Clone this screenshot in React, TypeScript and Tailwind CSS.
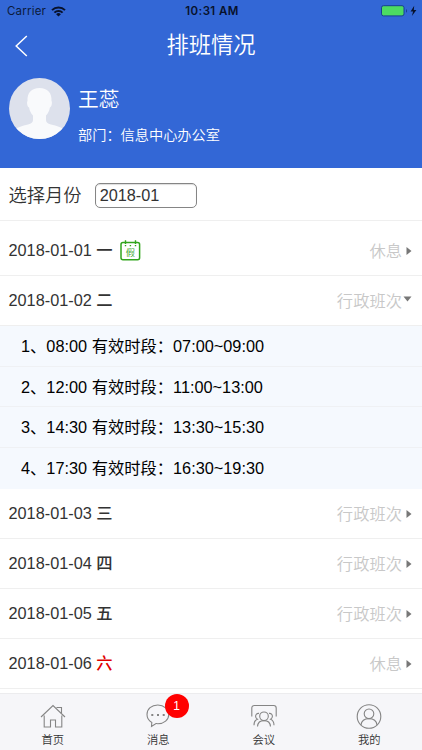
import React, { useState } from "react";

interface Shift {
  time: string;
  range: string;
}

interface Day {
  date: string;
  week: string;
  status: string;
  weekend?: boolean;
  holiday?: boolean;
  shifts?: Shift[];
}

const days: Day[] = [
  { date: "2018-01-01", week: "一", status: "休息", holiday: true },
  {
    date: "2018-01-02",
    week: "二",
    status: "行政班次",
    shifts: [
      { time: "08:00", range: "07:00~09:00" },
      { time: "12:00", range: "11:00~13:00" },
      { time: "14:30", range: "13:30~15:30" },
      { time: "17:30", range: "16:30~19:30" },
    ],
  },
  { date: "2018-01-03", week: "三", status: "行政班次" },
  { date: "2018-01-04", week: "四", status: "行政班次" },
  { date: "2018-01-05", week: "五", status: "行政班次" },
  { date: "2018-01-06", week: "六", status: "休息", weekend: true },
];

function StatusBar() {
  return (
    <div className="flex h-[22px] items-center justify-between pl-[7px] pr-[5px] font-['Inter','Liberation_Sans',sans-serif] text-[11.5px] text-[#0b1a3c]">
      <div className="flex w-[120px] items-center gap-[5px] pt-px">
        <span className="tracking-[0.2px]">Carrier</span>
        <svg width="15" height="11" viewBox="0 0 15 11" fill="none" stroke="#08122c" strokeWidth="2" className="mb-px">
          <path d="M1 4.1a9.3 9.3 0 0 1 13 0M3.4 6.6a5.9 5.9 0 0 1 8.2 0" />
          <path d="M7.5 10.6 5.1 8.2a3.5 3.5 0 0 1 4.8 0z" fill="#08122c" stroke="none" />
        </svg>
      </div>
      <span className="pt-px font-semibold tracking-[0.4px] text-[#08122c]">10:31 AM</span>
      <div className="flex w-[120px] items-center justify-end">
        <svg width="36" height="12" viewBox="0 0 36 12">
          <rect x="0.5" y="0.7" width="22.5" height="10.2" rx="2" fill="#4cdb62" stroke="#173f91" />
          <path d="M25 4v3.8c1.4-.6 1.4-3.2 0-3.8z" fill="#173f91" />
          <path d="M33.2.8 29.6 6.5h2.5L30.9 11l4.5-6h-2.6z" fill="#08122c" />
        </svg>
      </div>
    </div>
  );
}

function Avatar() {
  return (
    <svg width="61" height="61" viewBox="0 0 61 61" className="shrink-0">
      <defs>
        <clipPath id="avatar">
          <circle cx="30.5" cy="30.5" r="30.5" />
        </clipPath>
      </defs>
      <g clipPath="url(#avatar)">
        <rect width="61" height="61" fill="#dde1ec" />
        <path
          d="M30.5 10c-8 0-12.5 5-12 13-.8.5-.6 5.5 1.6 6.5.5 3.5 2 6 3.9 8V42c0 2.5-1.5 3.5-5 4.5-6 1.5-10 2.5-14 5.5v9h51v-9c-4-3-8-4-14-5.5-3.5-1-5-2-5-4.5v-4.5c1.9-2 3.4-4.5 3.9-8 2.2-1 2.4-6 1.6-6.5.5-8-4-13-12-13z"
          fill="#f9fafc"
        />
      </g>
    </svg>
  );
}

function HolidayIcon() {
  return (
    <svg width="21" height="21" viewBox="0 0 21 21" fill="none" className="ml-[7px]">
      <rect x="1" y="2.5" width="18.6" height="17.3" rx="2" stroke="#31a51c" strokeWidth="1.5" />
      <path d="M5.5.3V4M15.5.3V4" stroke="#31a51c" strokeWidth="1.4" />
      <path d="M4.8 5.6h1.4M9.7 5.6h1.4M14.8 5.6h1.4" stroke="#31a51c" strokeWidth="1.2" />
      <text x="10.3" y="16.3" textAnchor="middle" fontSize="9.3" fontWeight="350" fill="#31a51c">
        假
      </text>
    </svg>
  );
}

function DayRow({ day, first }: { day: Day; first: boolean }) {
  const [isOpen, setIsOpen] = useState(!!day.shifts);

  return (
    <div>
      <button
        onClick={() => setIsOpen(!isOpen)}
        className={`flex w-full items-center justify-between border-b border-[#efefef] pl-[8.5px] pr-[10px] ${
          first ? "h-[55px] pt-[5px]" : "h-[50px]"
        }`}
      >
        <span className="flex items-center">
          {day.date}
          <b className={`ml-[4.5px] font-medium ${day.weekend ? "text-[#e00000]" : "text-[#333]"}`}>{day.week}</b>
          {day.holiday && <HolidayIcon />}
        </span>
        <span className="flex items-center pt-px font-[350] text-[#c8c8c8]">
          {day.status}
          {isOpen && day.shifts ? (
            <svg width="9" height="6" viewBox="0 0 9 6" className="ml-px mb-[3px]">
              <path d="M.5.5h8l-4 5z" fill="#777" />
            </svg>
          ) : (
            <svg width="6" height="8" viewBox="0 0 6 8" className="ml-1">
              <path d="M.5 0v8l5-4z" fill="#777" />
            </svg>
          )}
        </span>
      </button>
      {isOpen && day.shifts && (
        <div className="bg-[#f5f9fe] text-black">
          {day.shifts.map((shift, index) => (
            <div key={index} className="flex h-[40.7px] items-center border-b border-[#eff1f4] pl-[21px] pt-[0.5px] last:border-0 last:pb-px">
              {index + 1}、{shift.time} 有效时段：{shift.range}
            </div>
          ))}
        </div>
      )}
    </div>
  );
}

const tabs = [
  {
    label: "首页",
    icon: <path d="M1 13 13 1.5 25 13M4.2 11.5V23h6.3v-7h5v7h6.3V11.5M16.5 3.5h5V9" />,
  },
  {
    label: "消息",
    badge: 1,
    icon: (
      <>
        <path d="M12.8 1C6.5 1 2 5 2 10.5c0 3.5 1.8 6.2 4.8 7.9l-.3 4.1 4.5-3c.7.1 1.2.2 1.800.2 6.2 0 11-4 11-9.2S19 1 12.800 1z" />
        <path d="M6.3 11h2M12 11h2M17.7 11h2" strokeWidth="2" />
      </>
    ),
  },
  {
    label: "会议",
    icon: (
      <>
        <path d="M.8 12.5V4a2.5 2.5 0 0 1 2.5-2.5h19.4A2.5 2.5 0 0 1 25.2 4v8.5" />
        <circle cx="13" cy="12.3" r="4.3" />
        <path d="M6.5 22.5c.3-3.8 2.8-5.9 6.5-5.9s6.2 2.1 6.5 5.9M8 9.4c-2.2-.4-3.4 1.1-3.4 2.9 0 1.6.8 2.4 1.8 2.9-2 .8-3.4 3-3.4 6M18 9.4c2.2-.4 3.4 1.1 3.4 2.9 0 1.6-.8 2.4-1.8 2.9 2 .8 3.4 3 3.4 6" />
      </>
    ),
  },
  {
    label: "我的",
    icon: (
      <>
        <circle cx="13" cy="12.5" r="11.8" />
        <circle cx="13" cy="9.8" r="4.8" />
        <path d="M5 21c.5-4 3.5-6.4 8-6.4s7.5 2.4 8 6.4" />
      </>
    ),
  },
];

export default function App() {
  return (
    <div className="flex h-[750px] w-[422px] flex-col overflow-hidden bg-white font-['Liberation_Sans','Noto_Sans_CJK_SC',sans-serif] text-[16.3px] leading-none text-[#333]">
      <header className="h-[168px] shrink-0 bg-[#3367d6] text-white">
        <StatusBar />
        <div className="grid h-[46px] grid-cols-[60px_1fr_60px] items-center">
          <svg width="13" height="22" viewBox="0 0 13 22" fill="none" stroke="white" strokeWidth="1.5" className="ml-[15px] mt-px">
            <path d="M11.8 1 1.2 11l10.6 10" />
          </svg>
          <h1 className="pt-[3px] text-center text-[22.3px] font-[350]">排班情况</h1>
        </div>
        <div className="flex gap-2 pl-[9px] pt-[10px]">
          <Avatar />
          <div className="pt-[12px]">
            <div className="text-[20.7px] font-[350]">王蕊</div>
            <div className="mt-[17px] text-[14.2px] font-[350]">部门：信息中心办公室</div>
          </div>
        </div>
      </header>

      <div className="flex h-[53px] shrink-0 items-center border-b border-[#efefef] pl-[8.5px] pt-[2px]">
        <span className="pt-[3px] text-[18.3px] font-[350]">选择月份</span>
        <div className="ml-[13px] flex h-[25px] w-[102px] items-center rounded-[5px] border border-[#858585] pt-px pl-1 shadow-[inset_0_1px_1px_#ddd]">
          2018-01
        </div>
      </div>

      <main className="min-h-0 flex-1 overflow-hidden">
        {days.map((day, index) => (
          <DayRow key={day.date} day={day} first={index === 0} />
        ))}
      </main>

      <nav className="grid h-[57px] shrink-0 grid-cols-4 border-t border-[#ececee] bg-[#f6f6f9] text-[11.3px]">
        {tabs.map((tab) => (
          <div key={tab.label} className="relative flex flex-col items-center pt-[10px]">
            <svg width="26" height="25" viewBox="0 0 26 25" fill="none" stroke="#858585" strokeWidth="1.1">
              {tab.icon}
            </svg>
            <span className="mt-[6px] font-[350]">{tab.label}</span>
            {tab.badge && (
              <span className="absolute left-[59px] top-0 flex size-6 items-center justify-center rounded-full bg-[#f00] text-xs text-white">
                {tab.badge}
              </span>
            )}
          </div>
        ))}
      </nav>
    </div>
  );
}
